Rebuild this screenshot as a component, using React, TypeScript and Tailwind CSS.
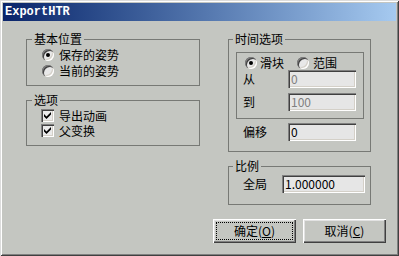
import React from 'react';

type GroupProps = {
  title?: string;
  titleLeft?: string;
  className?: string;
  children: React.ReactNode;
};

function GroupBox({ title, titleLeft = 'left-[5px]', className = '', children }: GroupProps) {
  return (
    <div className={`relative border border-[#777975] ${className}`}>
      {title && (
        <span className={`absolute -top-[8px] ${titleLeft} bg-[#c4c6c1] px-[2px] leading-[14px]`}>
          {title}
        </span>
      )}
      {children}
    </div>
  );
}

function Radio({ checked, className = '' }: { checked?: boolean; className?: string }) {
  return (
    <span
      className={`flex h-[12px] w-[12px] shrink-0 items-center justify-center rounded-full bg-[#e8e8e8] shadow-[inset_1px_1px_#808080,inset_2px_2px_#404040,inset_-1px_-1px_#ffffff,inset_-2px_-2px_#d4d0c8] ${className}`}
    >
      {checked && <span className="h-[4px] w-[4px] rounded-full bg-black" />}
    </span>
  );
}

function Checkbox() {
  return (
    <span className="flex h-[13px] w-[13px] shrink-0 items-center justify-center bg-[#ebebeb] shadow-[inset_1px_1px_#808080,inset_2px_2px_#404040,inset_-1px_-1px_#ffffff,inset_-2px_-2px_#d4d0c8]">
      <svg width="7" height="7" viewBox="0 0 7 7">
        <polygon points="0,2 2.5,4.5 7,0 7,2.5 2.5,7 0,4.5" fill="#000" />
      </svg>
    </span>
  );
}

function Field({ value, disabled, className = '' }: { value: string; disabled?: boolean; className?: string }) {
  return (
    <div
      className={`flex h-[18px] items-center bg-[#e6e6e6] pl-[3px] shadow-[inset_1px_1px_#808080,inset_2px_2px_#404040,inset_-1px_-1px_#ffffff,inset_-2px_-2px_#d4d0c8] ${
        disabled ? 'text-[#808080]' : 'text-black'
      } ${className}`}
    >
      {value}
    </div>
  );
}

function Button({ label, hot, focused }: { label: string; hot: string; focused?: boolean }) {
  return (
    <div className="flex h-[24px] w-[83px] p-[3px] shadow-[inset_1px_1px_#ffffff,inset_-1px_-1px_#404040,inset_-2px_-2px_#808080,inset_2px_2px_#e2e2e2]">
      <span
        className={`flex flex-1 items-center justify-center border border-dotted ${
          focused ? 'border-black' : 'border-transparent'
        }`}
      >
        {label}(<u>{hot}</u>)
      </span>
    </div>
  );
}

export default function App() {
  return (
    <div className="flex h-[256px] w-[399px] flex-col bg-[#c4c6c1] p-[3px] font-['SimSun','Noto_Sans_CJK_SC',sans-serif] text-[12px] leading-[14px] text-black shadow-[inset_1px_1px_#dcdcdc,inset_-1px_-1px_#404040,inset_2px_2px_#ffffff,inset_-2px_-2px_#808080]">
      {/* Title bar */}
      <div className="flex h-[18px] shrink-0 items-center bg-gradient-to-r from-[#0a246a] to-[#a6caf0] pl-[2px]">
        <span className="font-['Liberation_Mono',monospace] text-[12px] font-bold text-white">ExportHTR</span>
      </div>

      {/* Body */}
      <div className="flex flex-col pl-[23px] pt-[18px]">
        <div className="flex items-start">
          {/* Left column */}
          <div className="flex w-[174px] flex-col">
            <GroupBox title="基本位置" titleLeft="left-[5px]" className="pb-[6px] pl-[15px] pt-[7px]">
              <div className="flex h-[16px] items-center gap-[5px]">
                <Radio checked />
                <span>保存的姿势</span>
              </div>
              <div className="flex h-[16px] items-center gap-[5px]">
                <Radio />
                <span>当前的姿势</span>
              </div>
            </GroupBox>

            <GroupBox title="选项" titleLeft="left-[5px]" className="mt-[14px] pb-[7px] pl-[14px] pt-[7px]">
              <div className="flex h-[15px] items-center gap-[5px]">
                <Checkbox />
                <span>导出动画</span>
              </div>
              <div className="flex h-[15px] items-center gap-[5px]">
                <Checkbox />
                <span>父变换</span>
              </div>
            </GroupBox>
          </div>

          {/* Right column */}
          <div className="ml-[28px] flex w-[143px] flex-col">
            <GroupBox title="时间选项" titleLeft="left-[4px]" className="pb-[10px] pt-[12px]">
              <div className="ml-[7px] w-[128px] border border-[#777975] pb-[7px] pt-[2px]">
                <div className="flex h-[15px] items-center pl-[8px]">
                  <Radio checked />
                  <span className="ml-[3px]">滑块</span>
                  <Radio className="ml-[13px]" />
                  <span className="ml-[4px]">范围</span>
                </div>
                <div className="flex items-center pl-[6px]">
                  <span className="w-[45px]">从</span>
                  <Field value="0" disabled className="w-[68px]" />
                </div>
                <div className="mt-[5px] flex items-center pl-[6px]">
                  <span className="w-[45px]">到</span>
                  <Field value="100" disabled className="w-[68px]" />
                </div>
              </div>
              <div className="mt-[4px] flex items-center pl-[14px]">
                <span className="w-[45px]">偏移</span>
                <Field value="0" className="w-[68px]" />
              </div>
            </GroupBox>

            <GroupBox title="比例" titleLeft="left-[4px]" className="mt-[14px] pb-[11px] pt-[8px]">
              <div className="flex items-center pl-[14px]">
                <span className="w-[39px]">全局</span>
                <Field value="1.000000" className="w-[83px]" />
              </div>
            </GroupBox>
          </div>
        </div>

        {/* Buttons */}
        <div className="mt-[14px] flex gap-[7px] pl-[187px]">
          <Button label="确定" hot="O" focused />
          <Button label="取消" hot="C" />
        </div>
      </div>
    </div>
  );
}
